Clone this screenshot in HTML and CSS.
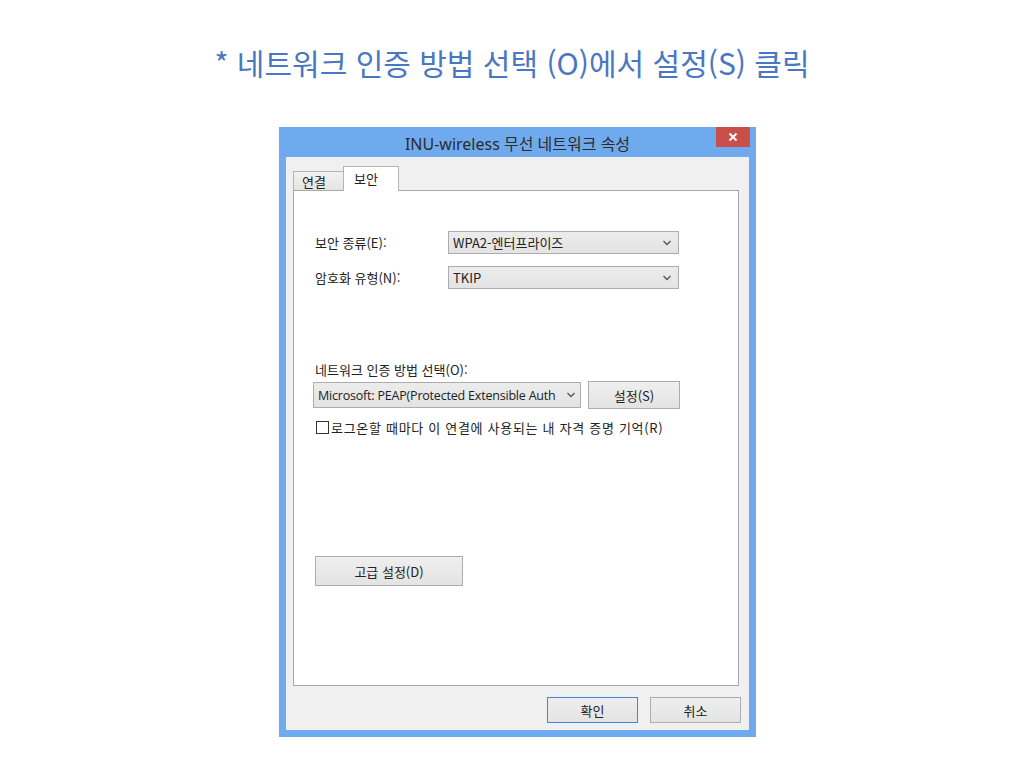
FILE: index.html
```html
<!DOCTYPE html>
<html lang="ko">
<head>
  <meta charset="UTF-8" />
  <title>네트워크 인증 방법</title>
  <link rel="stylesheet" href="styles.css">
</head>
<body>
  <h1 class="heading">* 네트워크 인증 방법 선택 (O)에서 설정(S) 클릭</h1>

  <div class="window">
    <div class="titlebar">
      <span class="title">INU-wireless 무선 네트워크 속성</span>
      <div class="close">
        <svg width="10" height="10" viewBox="0 0 10 10"><path d="M1.5 1.5 L8.5 8.5 M8.5 1.5 L1.5 8.5" stroke="#fff" stroke-width="2"/></svg>
      </div>
    </div>

    <div class="client">
      <div class="tabs">
        <div class="tab">연결</div>
        <div class="tab active">보안</div>
      </div>

      <div class="panel">
        <div class="field-row first">
          <span class="label">보안 종류(E):</span>
          <div class="select wide">
            <span>WPA2-엔터프라이즈</span>
            <svg class="chev" width="8" height="6" viewBox="0 0 8 6"><path d="M0.5 1 L4 4.5 L7.5 1" fill="none" stroke="#555" stroke-width="1.3"/></svg>
          </div>
        </div>
        <div class="field-row">
          <span class="label">암호화 유형(N):</span>
          <div class="select wide">
            <span>TKIP</span>
            <svg class="chev" width="8" height="6" viewBox="0 0 8 6"><path d="M0.5 1 L4 4.5 L7.5 1" fill="none" stroke="#555" stroke-width="1.3"/></svg>
          </div>
        </div>

        <p class="method-label">네트워크 인증 방법 선택(O):</p>
        <div class="method-row">
          <div class="select method">
            <span>Microsoft: PEAP(Protected Extensible Auth</span>
            <svg class="chev" width="8" height="6" viewBox="0 0 8 6"><path d="M0.5 1 L4 4.5 L7.5 1" fill="none" stroke="#555" stroke-width="1.3"/></svg>
          </div>
          <button class="btn setup">설정(S)</button>
        </div>
        <label class="check-row">
          <span class="checkbox"></span>
          <span class="check-text">로그온할 때마다 이 연결에 사용되는 내 자격 증명 기억(R)</span>
        </label>

        <button class="btn advanced">고급 설정(D)</button>
      </div>

      <div class="actions">
        <button class="btn default">확인</button>
        <button class="btn">취소</button>
      </div>
    </div>
  </div>
</body>
</html>
```

FILE: styles.css
```css
body {
  margin: 0;
  padding: 0;
  background: #ffffff;
  font-family: "Noto Sans", "Noto Sans CJK KR", sans-serif;
  color: #222;
}

.heading {
  margin: 0;
  padding-top: 43px;
  text-align: center;
  font-family: "Noto Sans CJK KR", sans-serif;
  font-size: 30px;
  font-weight: 400;
  line-height: 38px;
  color: #4a78c0;
}

.window {
  width: 463px;
  margin: 46px 0 0 279px;
  border: 7px solid #70aaee;
  border-top: none;
  background: #70aaee;
}

.titlebar {
  position: relative;
  height: 30px;
  display: flex;
  align-items: center;
  justify-content: center;
}

.title {
  font-family: "Noto Sans", "Noto Sans CJK KR", sans-serif;
  font-size: 16px;
  color: #2b2b2b;
  padding-top: 1px;
}

.close {
  position: absolute;
  top: 0;
  right: -1px;
  width: 34px;
  height: 20px;
  background: #c9504a;
  display: flex;
  align-items: center;
  justify-content: center;
}

.client {
  background: #f0f0f0;
  padding: 9px 1px 7px 7px;
  font-size: 13px;
}

.tabs {
  display: flex;
  align-items: flex-end;
  height: 24px;
}

.tab {
  height: 19px;
  width: 50px;
  border: 1px solid #b4b4b4;
  border-bottom: none;
  border-right: none;
  background: linear-gradient(#f2f2f2, #e4e4e4);
  font-family: "Noto Sans CJK KR", sans-serif;
  display: flex;
  align-items: center;
  padding-left: 8px;
  box-sizing: border-box;
}

.tab.active {
  height: 25px;
  width: 56px;
  background: #ffffff;
  border-right: 1px solid #b4b4b4;
  margin-bottom: -1px;
  position: relative;
  align-items: flex-start;
  padding-top: 2px;
  padding-left: 10px;
}

.panel {
  width: 446px;
  height: 496px;
  box-sizing: border-box;
  background: #ffffff;
  border: 1px solid #a8a8a8;
  padding: 40px 0 0 21px;
  font-family: "Noto Sans CJK KR", sans-serif;
}

.field-row {
  display: flex;
  align-items: center;
  margin-top: 12px;
}

.field-row.first {
  margin-top: 0;
}

.label {
  width: 133px;
}

.select {
  height: 23px;
  box-sizing: border-box;
  border: 1px solid #acacac;
  background: linear-gradient(#ececec, #e3e3e3);
  display: flex;
  align-items: center;
  justify-content: space-between;
  padding: 0 7px 0 4px;
  white-space: nowrap;
}

.select.wide {
  width: 231px;
}

.chev {
  flex: none;
}

.method-label {
  margin: 73px 0 0 0;
  line-height: 16px;
}

.method-row {
  display: flex;
  align-items: center;
  gap: 7px;
  margin: 3px 0 0 -2px;
}

.select.method {
  width: 268px;
  height: 26px;
  padding: 0 5px 0 4px;
  font-family: "Open Sans", "Noto Sans CJK KR", sans-serif;
  font-size: 12.5px;
  letter-spacing: -0.2px;
}

.btn {
  font-family: "Noto Sans CJK KR", sans-serif;
  font-size: 13px;
  color: #222;
  background: linear-gradient(#efefef, #e3e3e3);
  border: 1px solid #adadad;
  padding: 0;
  margin: 0;
  box-sizing: border-box;
}

.btn.setup {
  width: 92px;
  height: 28px;
}

.check-row {
  display: flex;
  align-items: center;
  gap: 2px;
  margin: 9px 0 0 1px;
}

.check-text {
  letter-spacing: 0.7px;
}

.checkbox {
  width: 13px;
  height: 13px;
  box-sizing: border-box;
  border: 1px solid #333;
  background: #fff;
}

.btn.advanced {
  display: block;
  width: 148px;
  height: 30px;
  margin-top: 119px;
}

.actions {
  display: flex;
  justify-content: flex-end;
  gap: 12px;
  padding: 11px 7px 0 0;
}

.actions .btn {
  width: 91px;
  height: 26px;
}

.btn.default {
  border: 1px solid #3c8ad6;
}
```
